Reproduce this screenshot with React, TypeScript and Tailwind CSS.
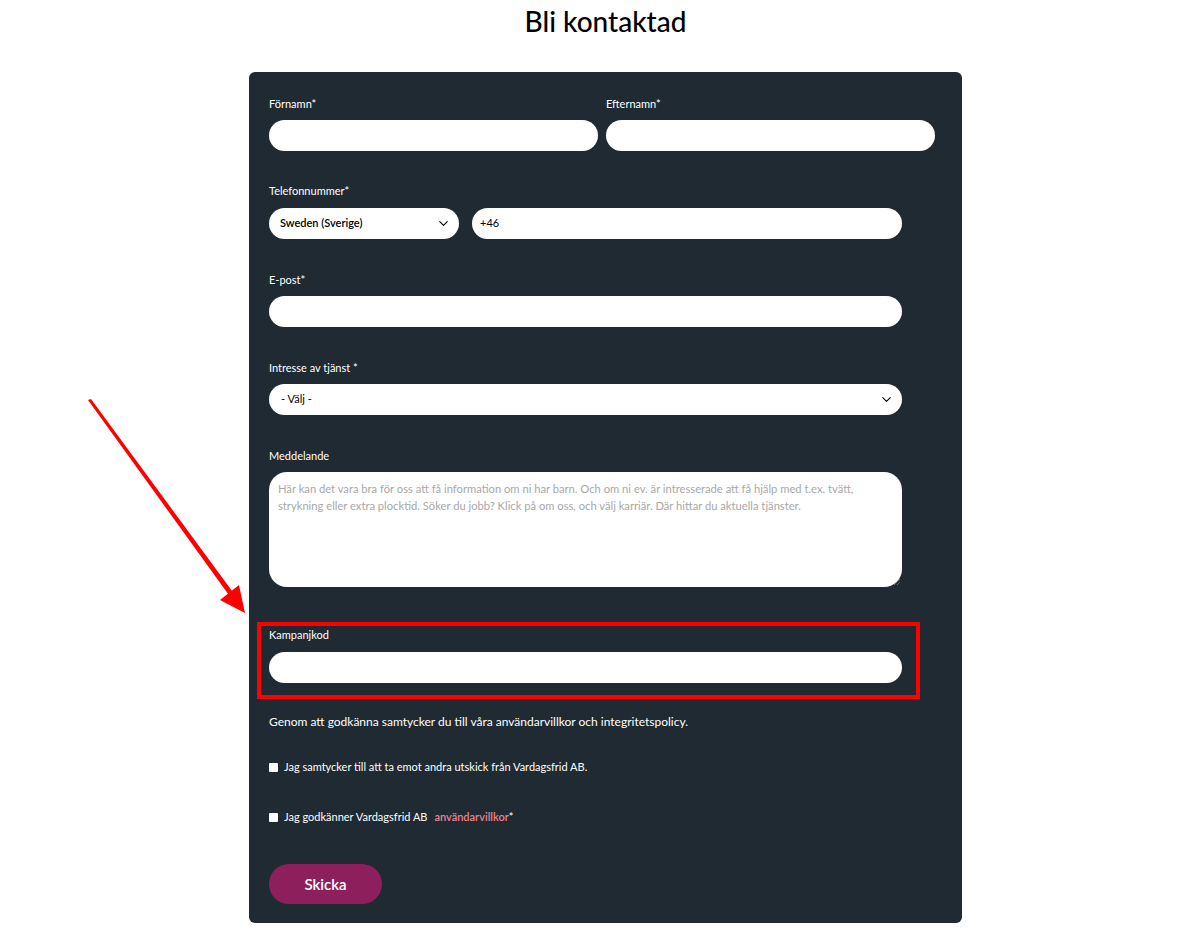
import { ChevronDown } from "lucide-react";

const font = { fontFamily: "Lato, 'Open Sans', sans-serif" };

function Label({ children }: { children: React.ReactNode }) {
  return <div className="text-[11px] leading-4 text-white mb-2">{children}</div>;
}

function Input({ className = "" }: { className?: string }) {
  return <div className={`h-[31px] bg-white rounded-full ${className}`} />;
}

function Select({ value, className = "" }: { value: string; className?: string }) {
  return (
    <div className={`h-[31px] bg-white rounded-full flex items-center justify-between pl-[11px] pr-[8px] ${className}`}>
      <span className="text-[11px] text-black">{value}</span>
      <ChevronDown size={15} strokeWidth={1.8} className="text-black" />
    </div>
  );
}

export default function App() {
  return (
    <div className="relative min-h-[934px] w-[1200px] bg-white" style={font}>
      <h1 className="pl-[11px] text-center text-[28px] leading-[42px] font-medium text-black">Bli kontaktad</h1>

      {/* annotation arrow */}
      <svg className="absolute left-0 top-0 pointer-events-none" width="300" height="640">
        <polygon points="88,400 91,399 235,595 231,598" fill="#ff0000" />
        <polygon points="245,613 220,600 239,585" fill="#ff0000" />
      </svg>

      <div className="relative ml-[249px] mt-[30px] w-[713px] h-[851px] bg-[#1f2a33] rounded-[6px] pt-[24px] px-[20px]">
        <div className="flex gap-[8px] pr-[7px]">
          <div className="flex-1">
            <Label>Förnamn*</Label>
            <Input />
          </div>
          <div className="flex-1">
            <Label>Efternamn*</Label>
            <Input />
          </div>
        </div>

        <div className="mt-[32px] w-[633px]">
          <Label>Telefonnummer*</Label>
          <div className="flex gap-[13px] mt-[9px]">
            <Select value="Sweden (Sverige)" className="w-[190px] font-semibold" />
            <div className="flex-1 h-[31px] bg-white rounded-full flex items-center pl-[8px] text-[11px] text-black">+46</div>
          </div>
        </div>

        <div className="mt-[33px] w-[633px]">
          <Label>E-post*</Label>
          <Input />
        </div>

        <div className="mt-[33px] w-[633px]">
          <Label>Intresse av tjänst *</Label>
          <Select value="- Välj -" className="pl-[12px]" />
        </div>

        <div className="mt-[33px] w-[633px]">
          <Label>Meddelande</Label>
          <div className="relative h-[115px] bg-white rounded-[18px] pl-[9px] pr-[40px] pt-[8px] text-[11.2px] leading-[17px] text-[#a8a8a8]">
            Här kan det vara bra för oss att få information om ni har barn. Och om ni ev. är intresserade att få hjälp med t.ex. tvätt, strykning eller extra plocktid. Söker du jobb? Klick på om oss, och välj karriär. Där hittar du aktuella tjänster.
            <svg className="absolute right-[1px] bottom-[1px]" width="8" height="8">
              <line x1="1" y1="7" x2="7" y2="1" stroke="#777" strokeWidth="0.8" />
              <line x1="4" y1="7" x2="7" y2="4" stroke="#777" strokeWidth="0.8" />
            </svg>
          </div>
        </div>

        <div className="mt-[40px] w-[633px]">
          <div className="text-[11px] leading-4 text-white mb-[9px]">Kampanjkod</div>
          <Input />
        </div>

        <p className="mt-[31px] text-[12px] leading-4 text-white">
          Genom att godkänna samtycker du till våra användarvillkor och integritetspolicy.
        </p>

        <div className="mt-[29px] flex items-center gap-[6px] text-[11px] leading-4 text-white">
          <span className="w-[9px] h-[9px] bg-white rounded-[1px]" />
          Jag samtycker till att ta emot andra utskick från Vardagsfrid AB.
        </div>

        <div className="mt-[34px] flex items-center gap-[6px] text-[11px] leading-4 text-white">
          <span className="w-[9px] h-[9px] bg-white rounded-[1px]" />
          <span>Jag godkänner Vardagsfrid AB</span>
          <span className="ml-[1px] text-[#e8838f] font-semibold">användarvillkor<span className="text-white font-normal">*</span></span>
        </div>

        <button className="mt-[39px] w-[113px] h-[40px] rounded-full bg-[#8e1f5d] text-white text-[15px] font-semibold">
          Skicka
        </button>

        {/* annotation box */}
        <div className="absolute left-[8px] top-[550px] w-[663px] h-[77px] border-[4px] border-[#ff0000] pointer-events-none" />
      </div>
    </div>
  );
}
